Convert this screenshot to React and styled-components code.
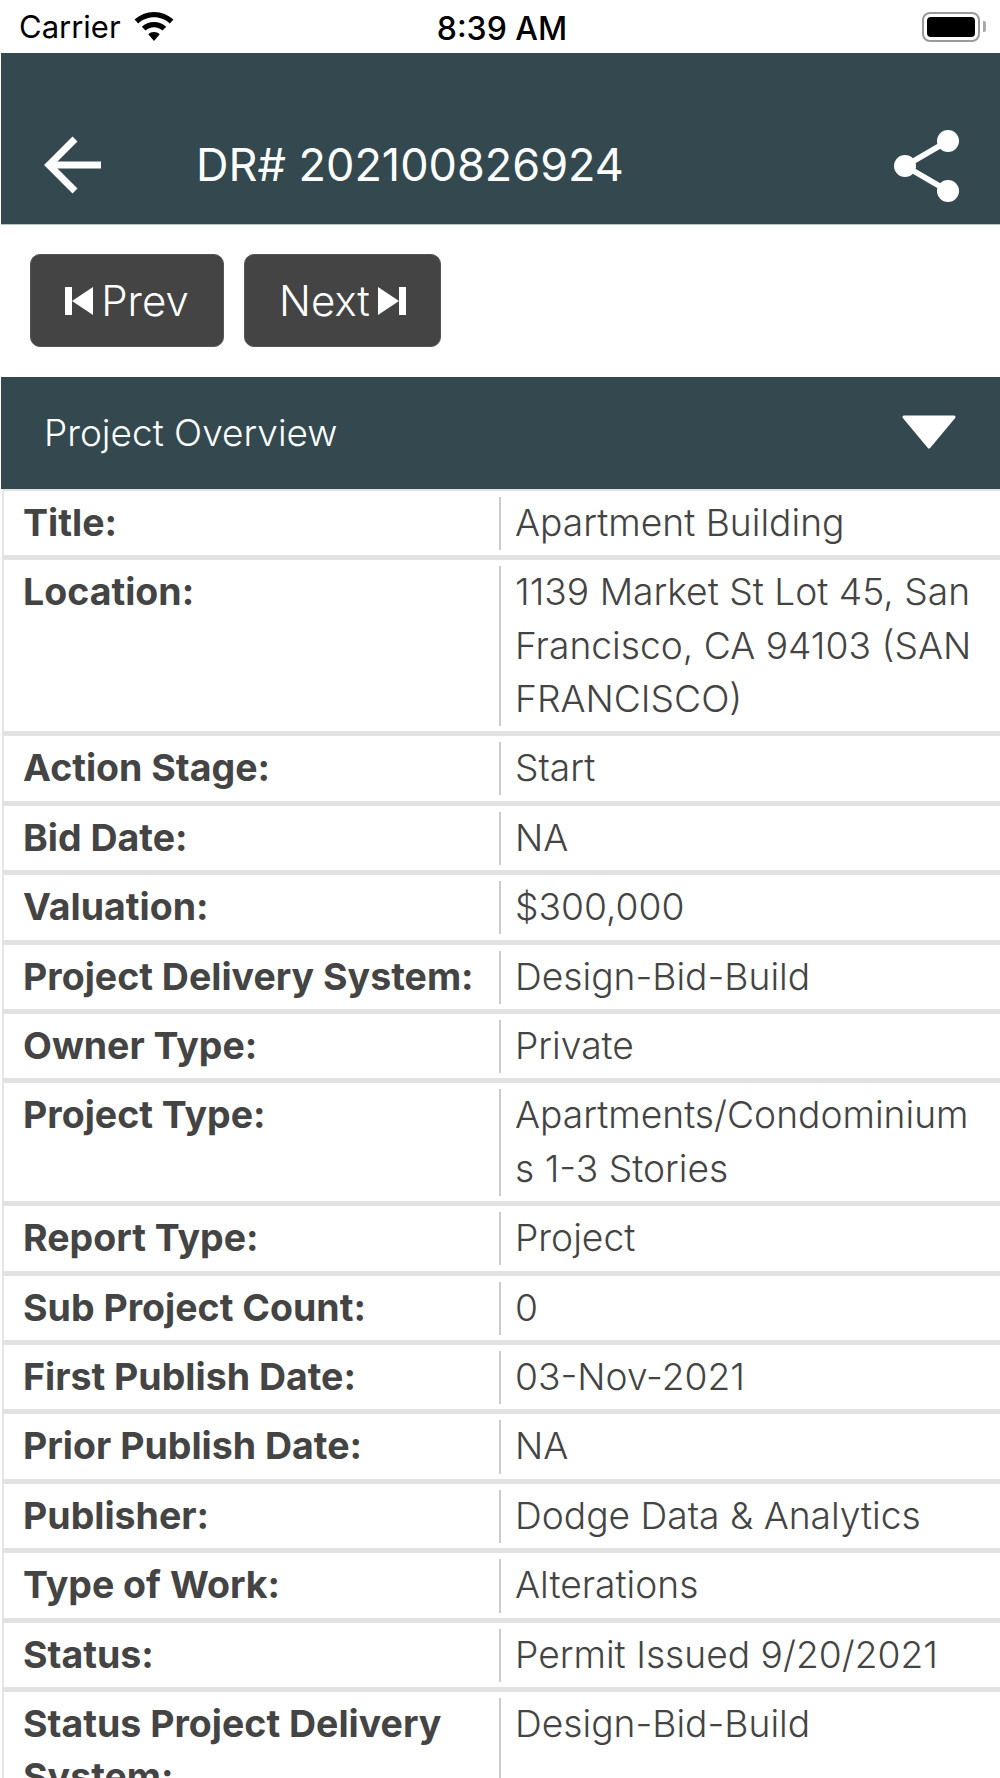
import React from 'react';
import styled, { createGlobalStyle } from 'styled-components';

const GlobalStyle = createGlobalStyle`
  html, body {
    margin: 0;
    padding: 0;
    background: #fff;
  }
  body {
    font-family: Inter, "Liberation Sans", sans-serif;
  }
`;

const Screen = styled.div`
  width: 1000px;
  height: 1778px;
  overflow: hidden;
  background: #fff;
`;

const StatusBar = styled.div`
  height: 53px;
  box-sizing: border-box;
  padding: 0 15px 0 19px;
  display: grid;
  grid-template-columns: 1fr auto 1fr;
  align-items: center;
  color: #000;
`;

const StatusLeft = styled.div`
  display: flex;
  align-items: center;
  gap: 13px;
  font-size: 31px;
`;

const Clock = styled.div`
  padding-top: 3px;
  font-size: 32px;
  font-weight: 500;
`;

const Battery = styled.div`
  justify-self: end;
  position: relative;
  width: 58px;
  height: 30px;
  box-sizing: border-box;
  border: 2px solid #9a9a9a;
  border-radius: 8px;
  padding: 3px;
  margin-right: 5px;

  &:before {
    content: '';
    display: block;
    height: 100%;
    background: #000;
    border-radius: 4px;
  }

  &:after {
    content: '';
    position: absolute;
    right: -8px;
    top: 7px;
    width: 3px;
    height: 11px;
    background: #aaa;
    border-radius: 0 2px 2px 0;
  }
`;

const Header = styled.header`
  height: 172px;
  box-sizing: border-box;
  margin-left: 1px;
  background: #33494f;
  border-bottom: 1px solid #b9c2c5;
  padding: 83px 40px 0 42px;
  display: flex;
  align-items: flex-start;
  color: #fff;
`;

const Title = styled.h1`
  margin: 4px 0 0 95px;
  flex: 1;
  font-size: 45px;
  line-height: 50px;
  font-weight: 400;
`;

const ShareSvg = styled.svg`
  margin-top: -6px;
`;

const ButtonRow = styled.div`
  display: flex;
  gap: 20px;
  padding: 29px 30px 30px;
`;

const PagerButton = styled.button`
  height: 93px;
  width: ${props => props.$width}px;
  padding: 0;
  border: 1px solid #555;
  border-radius: 10px;
  background: #444;
  color: #fff;
  font-family: inherit;
  font-size: 42px;
  font-weight: 300;
  display: flex;
  align-items: center;
  justify-content: center;
  gap: 8px;
`;

const SectionBar = styled.div`
  height: 112px;
  box-sizing: border-box;
  margin-left: 1px;
  background: #33494f;
  padding: 0 43px 2px 43px;
  display: flex;
  align-items: center;
  justify-content: space-between;
  color: #fff;
  font-size: 37px;
  font-weight: 300;
`;

const Table = styled.div`
  margin-left: 2px;
  padding-top: 2px;
  background: #e2e2e2;
  display: flex;
  flex-direction: column;
  gap: 5px;
`;

const Row = styled.div`
  background: #fff;
  border-left: 2px solid #e6e6e6;
  display: grid;
  grid-template-columns: 495px 1fr;
  padding: 6px 0 5.24px;
`;

const Label = styled.div`
  margin: -1px 0 1px;
  padding-left: 19px;
  font-size: 37.5px;
  line-height: 53.2px;
  font-weight: 700;
  color: #444;
`;

const Value = styled.div`
  border-left: 2px solid #ccc;
  padding: 0 18px 0 14px;
`;

const ValueText = styled.div`
  margin: -1px 0 1px;
  font-size: 37.2px;
  line-height: 53.2px;
  font-weight: 300;
  color: #444;
  overflow-wrap: anywhere;
`;

const rows = [
  ['Title:', 'Apartment Building'],
  ['Location:', '1139 Market St Lot 45, San Francisco, CA 94103 (SAN FRANCISCO)'],
  ['Action Stage:', 'Start'],
  ['Bid Date:', 'NA'],
  ['Valuation:', '$300,000'],
  ['Project Delivery System:', 'Design-Bid-Build'],
  ['Owner Type:', 'Private'],
  ['Project Type:', 'Apartments/Condominiums 1-3 Stories'],
  ['Report Type:', 'Project'],
  ['Sub Project Count:', '0'],
  ['First Publish Date:', '03-Nov-2021'],
  ['Prior Publish Date:', 'NA'],
  ['Publisher:', 'Dodge Data & Analytics'],
  ['Type of Work:', 'Alterations'],
  ['Status:', 'Permit Issued 9/20/2021'],
  ['Status Project Delivery System:', 'Design-Bid-Build'],
];

const WifiIcon = () => (
  <svg width="40" height="29" viewBox="0 0 40 29">
    <path d="M20 0C12.5 0 5.7 2.9.6 7.6l3.6 3.8C8.4 7.6 13.9 5.3 20 5.3s11.6 2.3 15.8 6.1l3.6-3.8C34.3 2.9 27.5 0 20 0z" fill="#000" />
    <path d="M20 10c-4.7 0-9 1.8-12.2 4.8l3.7 3.8c2.2-2 5.2-3.3 8.5-3.3s6.3 1.3 8.5 3.3l3.7-3.8C29 11.8 24.7 10 20 10z" fill="#000" />
    <path d="M20 20c-2.2 0-4.2.8-5.7 2.2L20 29l5.7-6.8C24.2 20.8 22.2 20 20 20z" fill="#000" />
  </svg>
);

const BackIcon = () => (
  <svg width="58" height="58" viewBox="0 0 58 58" fill="none" stroke="#fff" strokeWidth="7">
    <path d="M58 29H6" />
    <path d="M32 3L6 29l26 26" />
  </svg>
);

const ShareIcon = () => (
  <ShareSvg width="66" height="72" viewBox="0 0 66 72" fill="#fff" stroke="#fff">
    <path d="M54 11L11 36l43 25" fill="none" strokeWidth="5.5" />
    <circle cx="54" cy="11" r="11" stroke="none" />
    <circle cx="11" cy="36" r="11" stroke="none" />
    <circle cx="54" cy="61" r="11" stroke="none" />
  </ShareSvg>
);

const PrevIcon = () => (
  <svg width="28" height="28" viewBox="0 0 28 28" fill="#fff">
    <rect x="0" y="0" width="7" height="28" />
    <path d="M7 14L28 0v28z" />
  </svg>
);

const NextIcon = () => (
  <svg width="28" height="28" viewBox="0 0 28 28" fill="#fff">
    <rect x="21" y="0" width="7" height="28" />
    <path d="M21 14L0 0v28z" />
  </svg>
);

const CaretIcon = () => (
  <svg width="56" height="36" viewBox="0 0 56 36" fill="#fff" stroke="#fff" strokeWidth="3" strokeLinejoin="round">
    <path d="M3 3h50L28 33z" />
  </svg>
);

const App = () => (
  <Screen>
    <GlobalStyle />
    <StatusBar>
      <StatusLeft>
        Carrier
        <WifiIcon />
      </StatusLeft>
      <Clock>8:39 AM</Clock>
      <Battery />
    </StatusBar>
    <Header>
      <BackIcon />
      <Title>DR# 202100826924</Title>
      <ShareIcon />
    </Header>
    <ButtonRow>
      <PagerButton $width={194}>
        <PrevIcon />
        Prev
      </PagerButton>
      <PagerButton $width={197}>
        Next
        <NextIcon />
      </PagerButton>
    </ButtonRow>
    <SectionBar>
      Project Overview
      <CaretIcon />
    </SectionBar>
    <Table>
      {rows.map(([label, value]) => (
        <Row key={label}>
          <Label>{label}</Label>
          <Value>
            <ValueText>{value}</ValueText>
          </Value>
        </Row>
      ))}
    </Table>
  </Screen>
);

export default App;
